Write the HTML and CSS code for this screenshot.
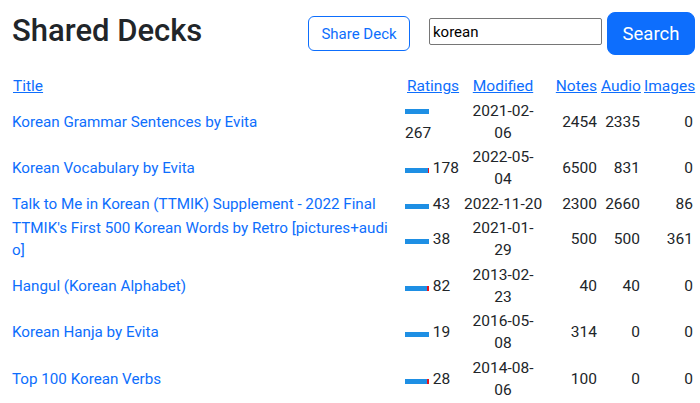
FILE: index.html
```html
<!DOCTYPE html>
<html lang="en">
<head>
<meta charset="utf-8">
<title>Shared Decks</title>
<link rel="stylesheet" href="styles.css">
</head>
<body>
<div class="page">
  <header class="topbar">
    <h1 class="page-title">Shared Decks</h1>
    <div class="actions">
      <button class="btn btn-outline" type="button">Share Deck</button>
      <form class="search">
        <input class="search-input" type="text" value="korean">
        <button class="btn btn-primary" type="submit">Search</button>
      </form>
    </div>
  </header>

  <table class="decks">
    <colgroup>
      <col class="c-title">
      <col class="c-ratings">
      <col class="c-modified">
      <col class="c-notes">
      <col class="c-audio">
      <col class="c-images">
    </colgroup>
    <thead>
      <tr>
        <th class="cell-title"><a href="#">Title</a></th>
        <th class="cell-rating"><a href="#">Ratings</a></th>
        <th class="cell-date"><a href="#">Modified</a></th>
        <th class="cell-num"><a href="#">Notes</a></th>
        <th class="cell-num"><a href="#">Audio</a></th>
        <th class="cell-num"><a href="#">Images</a></th>
      </tr>
    </thead>
    <tbody>
      <tr>
        <td class="cell-title"><a href="#">Korean Grammar Sentences by Evita</a></td>
        <td class="cell-rating"><span class="bar bar--block"><span class="bar-pos" style="width:100%"></span></span>267</td>
        <td class="cell-date">2021-02-06</td>
        <td class="cell-num">2454</td>
        <td class="cell-num">2335</td>
        <td class="cell-num">0</td>
      </tr>
      <tr>
        <td class="cell-title"><a href="#">Korean Vocabulary by Evita</a></td>
        <td class="cell-rating"><span class="bar"><span class="bar-pos" style="width:95%"></span><span class="bar-neg" style="width:5%"></span></span> 178</td>
        <td class="cell-date">2022-05-04</td>
        <td class="cell-num">6500</td>
        <td class="cell-num">831</td>
        <td class="cell-num">0</td>
      </tr>
      <tr>
        <td class="cell-title"><a href="#">Talk to Me in Korean (TTMIK) Supplement - 2022 Final</a></td>
        <td class="cell-rating"><span class="bar"><span class="bar-pos" style="width:100%"></span></span> 43</td>
        <td class="cell-date cell-date--single">2022-11-20</td>
        <td class="cell-num">2300</td>
        <td class="cell-num">2660</td>
        <td class="cell-num">86</td>
      </tr>
      <tr>
        <td class="cell-title"><a href="#">TTMIK's First 500 Korean Words by Retro [pictures+audio]</a></td>
        <td class="cell-rating"><span class="bar"><span class="bar-pos" style="width:100%"></span></span> 38</td>
        <td class="cell-date">2021-01-29</td>
        <td class="cell-num">500</td>
        <td class="cell-num">500</td>
        <td class="cell-num">361</td>
      </tr>
      <tr>
        <td class="cell-title"><a href="#">Hangul (Korean Alphabet)</a></td>
        <td class="cell-rating"><span class="bar"><span class="bar-pos" style="width:90%"></span><span class="bar-neg" style="width:10%"></span></span> 82</td>
        <td class="cell-date">2013-02-23</td>
        <td class="cell-num">40</td>
        <td class="cell-num">40</td>
        <td class="cell-num">0</td>
      </tr>
      <tr>
        <td class="cell-title"><a href="#">Korean Hanja by Evita</a></td>
        <td class="cell-rating"><span class="bar"><span class="bar-pos" style="width:100%"></span></span> 19</td>
        <td class="cell-date">2016-05-08</td>
        <td class="cell-num">314</td>
        <td class="cell-num">0</td>
        <td class="cell-num">0</td>
      </tr>
      <tr>
        <td class="cell-title"><a href="#">Top 100 Korean Verbs</a></td>
        <td class="cell-rating"><span class="bar"><span class="bar-pos" style="width:93%"></span><span class="bar-neg" style="width:7%"></span></span> 28</td>
        <td class="cell-date">2014-08-06</td>
        <td class="cell-num">100</td>
        <td class="cell-num">0</td>
        <td class="cell-num">0</td>
      </tr>
    </tbody>
  </table>
</div>
</body>
</html>
```

FILE: styles.css
```css
html, body {
  margin: 0;
  background: #fff;
}

body {
  font-family: Roboto, "Liberation Sans", Arial, sans-serif;
  font-size: 15.5px;
  color: #212529;
}

.page {
  padding: 12px 5px 0 12px;
}

/* ---------- top bar ---------- */
.topbar {
  display: flex;
  align-items: center;
  justify-content: space-between;
  margin-bottom: 19px;
}

.page-title {
  margin: 0 0 5px 0;
  font-size: 31px;
  font-weight: 500;
  line-height: 1.2;
  color: #212529;
}

.actions {
  display: flex;
  align-items: center;
  gap: 19px;
}

.search {
  display: flex;
  align-items: center;
  gap: 5px;
  margin: 0;
}

.btn {
  font-family: inherit;
  cursor: pointer;
  border: 1px solid #0d6efd;
  box-sizing: border-box;
}

.btn-outline {
  width: 102px;
  height: 35px;
  padding: 0;
  font-size: 15px;
  color: #0d6efd;
  background: #fff;
  border-radius: 6px;
}

.btn-primary {
  width: 88px;
  height: 43px;
  padding: 0;
  font-size: 18.5px;
  color: #fff;
  background: #0d6efd;
  border-radius: 8px;
}

.search-input {
  box-sizing: border-box;
  width: 173px;
  height: 27px;
  margin: 0;
  padding: 0 3px;
  font-family: inherit;
  font-size: 15px;
  color: #000;
  border: 1px solid #767676;
  border-radius: 2px;
  margin-top: -4px;
}

/* ---------- table ---------- */
.decks {
  width: 683px;
  border-collapse: collapse;
  table-layout: fixed;
}

.c-title    { width: 392px; }
.c-ratings  { width: 57px; }
.c-modified { width: 84px; }
.c-notes    { width: 54px; }
.c-audio    { width: 43px; }
.c-images   { width: 53px; }

.decks th,
.decks td {
  padding: 1.25px 2px;
  line-height: 22px;
  font-weight: 400;
  vertical-align: middle;
}

.decks a {
  color: #0d6efd;
}

.decks td a {
  text-decoration: none;
}

.decks th a {
  text-decoration: underline;
}

.cell-title {
  text-align: left;
  word-break: break-all;
  padding-left: 0 !important;
  padding-right: 8px !important;
}

.decks td.cell-title {
  font-size: 15.2px;
}

.decks th.cell-title {
  padding-left: 1px !important;
}

.cell-rating {
  text-align: left;
  white-space: nowrap;
  padding-left: 1px !important;
}

.decks th.cell-rating {
  padding-left: 3px !important;
}

.cell-date {
  text-align: center;
  padding-left: 3px !important;
  padding-right: 3px !important;
}

.cell-date--single {
  white-space: nowrap;
}

.cell-num {
  text-align: right;
}

/* rating bar */
.bar {
  display: inline-flex;
  width: 24px;
  height: 5px;
  vertical-align: baseline;
  margin-bottom: 1px;
}

.bar--block {
  display: flex;
  margin: 9px 0 8px;
}

.bar-pos {
  display: block;
  height: 100%;
  background: #1e8fe4;
}

.bar-neg {
  display: block;
  height: 100%;
  background: #e8141c;
}
```
